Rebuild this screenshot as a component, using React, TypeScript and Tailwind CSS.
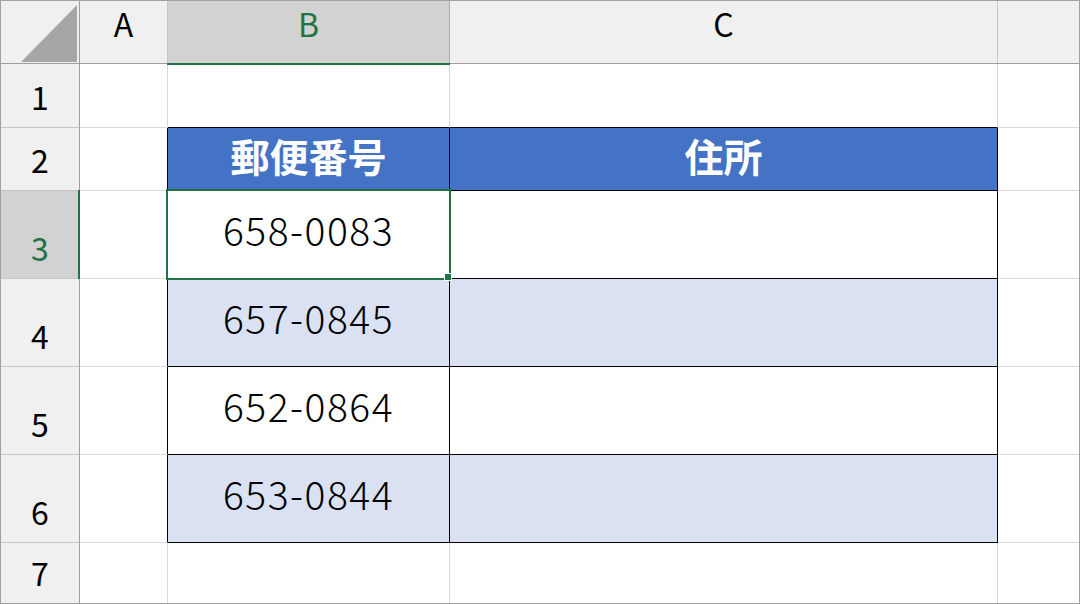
import React from 'react';

const GREEN = '#217346';

type Row = {
  num: number;
  h: string;
  band?: 'head' | 'light' | 'white';
  b?: string;
  c?: string;
  selected?: boolean;
};

const rows: Row[] = [
  { num: 1, h: 'h-[64px]' },
  { num: 2, h: 'h-[63px]', band: 'head', b: '郵便番号', c: '住所' },
  { num: 3, h: 'h-[88px]', band: 'white', b: '658-0083', selected: true },
  { num: 4, h: 'h-[88px]', band: 'light', b: '657-0845' },
  { num: 5, h: 'h-[88px]', band: 'white', b: '652-0864' },
  { num: 6, h: 'h-[88px]', band: 'light', b: '653-0844' },
  { num: 7, h: 'h-[60px]' },
];

const cjk = { fontFamily: '"Noto Sans CJK JP", "Noto Sans", sans-serif' };

function ColumnHeader() {
  return (
    <div className="flex h-[63px] border-b border-[#9e9e9e] bg-[#f0f0f0] text-[32px] leading-none text-black">
      <div className="relative w-[79px] border-r border-[#9e9e9e]">
        <svg className="absolute left-0 top-0" width="79" height="62" viewBox="0 0 79 62">
          <polygon points="76,4 76,61 20,61" fill="#a6a6a6" />
        </svg>
      </div>
      <div className="flex w-[88px] items-start justify-center border-r border-[#c6c6c6] pt-[6px]">A</div>
      <div className="flex w-[282px] items-start justify-center border-r border-[#ababab] bg-[#d2d2d2] pt-[6px] text-[#217346]">
        B
      </div>
      <div className="flex w-[548px] items-start justify-center border-r border-[#c6c6c6] pt-[6px]">C</div>
      <div className="w-[81px]" />
    </div>
  );
}

function GridRow({ row, last }: { row: Row; last: boolean }) {
  const inTable = !!row.band;
  const below = rows[rows.indexOf(row) + 1];
  const bottomBlack = inTable || !!below?.band;

  const fill =
    row.band === 'head' ? 'bg-[#4472c4]' : row.band === 'light' ? 'bg-[#d9e1f2]' : 'bg-white';
  const right = inTable ? 'border-r border-black' : 'border-r border-[#dadada]';
  const bottom = bottomBlack ? 'border-b border-b-black' : last ? '' : 'border-b border-b-[#dadada]';

  return (
    <div className={`flex ${row.h}`}>
      <div
        className={`flex w-[79px] items-end justify-center border-r border-[#9e9e9e] pb-[15px] text-[32px] leading-none ${
          last ? '' : 'border-b border-b-[#c6c6c6]'
        } ${row.selected ? 'bg-[#d2d2d2] text-[#217346]' : 'bg-[#f0f0f0] text-black'}`}
      >
        {row.num}
      </div>
      <div className={`w-[88px] bg-white ${right} ${last ? '' : 'border-b border-b-[#dadada]'}`} />
      <div
        className={`flex w-[282px] items-center justify-center ${fill} ${right} ${bottom} leading-none ${
          row.band === 'head'
            ? 'pb-[8px] text-[39px] font-bold text-white'
            : 'pb-[10px] text-[39px] font-light tracking-[1.5px] text-black'
        }`}
      >
        {row.b}
      </div>
      <div
        className={`flex w-[548px] items-center justify-center ${fill} ${right} ${bottom} pb-[8px] text-[39px] font-bold leading-none text-white`}
      >
        {row.c}
      </div>
      <div className={`w-[81px] bg-white ${last ? '' : 'border-b border-[#dadada]'}`} />
    </div>
  );
}

export default function App() {
  return (
    <div className="relative h-[604px] w-[1080px] overflow-hidden border border-[#a0a0a0] bg-white" style={cjk}>
      <ColumnHeader />
      {rows.map((row, i) => (
        <GridRow key={row.num} row={row} last={i === rows.length - 1} />
      ))}

      {/* selection indicators */}
      <div className="absolute left-[166px] top-[62px] h-[2px] w-[283px]" style={{ background: GREEN }} />
      <div className="absolute left-[77px] top-[189px] h-[89px] w-[2px]" style={{ background: GREEN }} />
      <div className="absolute left-[165px] top-[188px] h-[91px] w-[285px] border-2 border-[#217346]" />
      <div className="absolute left-[443px] top-[272px] h-[8px] w-[8px] border border-white bg-[#217346]" />
    </div>
  );
}
